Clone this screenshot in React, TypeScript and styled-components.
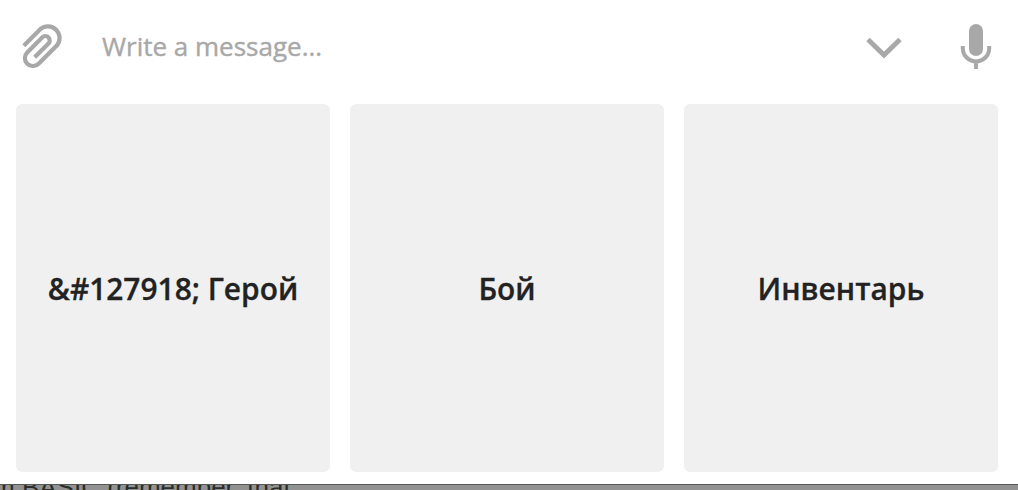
/**
 * Message composer with a reply keyboard underneath it. A strip of the
 * dimmed page behind the panel shows along the bottom edge.
 */
import styled, { createGlobalStyle } from 'styled-components';

const KEYS = ['&#127918; Герой', 'Бой', 'Инвентарь'];

const GlobalStyle = createGlobalStyle`
  * {
    box-sizing: border-box;
  }

  body {
    margin: 0;
    background: #fff;
    font-family: 'Open Sans', 'Noto Sans', sans-serif;
  }
`;

const Screen = styled.div`
  display: flex;
  flex-direction: column;
  height: 490px;
  overflow: hidden;
`;

const Composer = styled.div`
  display: flex;
  align-items: center;
  flex: none;
  height: 104px;
  padding: 0 26px 12px 22px;
  color: #a8a8a8;
`;

const IconButton = styled.button<{ $width: number; $gap?: number }>`
  flex: none;
  width: ${({ $width }) => $width}px;
  height: 46px;
  margin: 0 0 0 ${({ $gap = 0 }) => $gap}px;
  padding: 0;
  border: 0;
  background: none;
  color: inherit;

  svg {
    display: block;
    fill: none;
    stroke: currentColor;
    stroke-width: 4;
  }
`;

const Placeholder = styled.div`
  flex: 1;
  margin-left: 38px;
  font-size: 26px;
  line-height: 36px;
  white-space: nowrap;
  -webkit-text-stroke: 0.4px currentColor;
`;

const Keyboard = styled.div`
  display: grid;
  grid-template-columns: repeat(3, 314px);
  gap: 20px;
  flex: none;
  height: 368px;
  padding-left: 16px;
`;

const Key = styled.button`
  padding: 2px 0 0;
  border: 0;
  border-radius: 6px;
  background: #f0f0f0;
  color: #222;
  font-family: inherit;
  font-size: 29.9px;
  font-weight: 600;
  line-height: 42px;
  white-space: nowrap;
  -webkit-text-stroke: 0.3px currentColor;
`;

const Backdrop = styled.div`
  flex: none;
  height: 6px;
  margin-top: 12px;
  overflow: hidden;
  border-top: 1px solid #555855;
  background: #929292;
  color: #2b2e2b;
`;

const BackdropText = styled.div`
  margin: -13px 0 0 -7px;
  font-family: 'Liberation Sans', Arial, sans-serif;
  font-size: 26px;
  line-height: 30px;
  white-space: nowrap;
`;

function ClipIcon() {
  return (
    <svg width="42" height="46" viewBox="22 23 42 46" aria-hidden="true">
      <path
        d="M23.8 45.8 40.2 29.2A11.7 11.7 0 0 1 56.8 45.6L38.6 63.8A8 8 0 0 1 27.2 52.4L42.4 37.2A4.4 4.4 0 0 1 48.7 43.3L34.7 57.3"
        strokeWidth="4.2"
      />
    </svg>
  );
}

// stroke widths are set in CSS, since the shared svg rule is only inherited
const Chevron = styled.path`
  stroke-width: 4.9;
`;

function ChevronIcon() {
  return (
    <svg width="36" height="46" viewBox="866 23 36 46" aria-hidden="true">
      <Chevron d="M868 39.5 884 55 900 39.5" />
    </svg>
  );
}

function MicIcon() {
  return (
    <svg width="32" height="46" viewBox="960 23 32 46" aria-hidden="true">
      <rect x="969" y="24" width="14" height="32" rx="7" fill="currentColor" stroke="none" />
      <path d="M962.8 46V48.2A13.2 13.2 0 0 0 989.2 48.2V46M976 61V69" />
    </svg>
  );
}

export default function App() {
  return (
    <>
      <GlobalStyle />
      <Screen>
        <Composer>
          <IconButton $width={42} aria-label="Attach file">
            <ClipIcon />
          </IconButton>
          <Placeholder>Write a message...</Placeholder>
          <IconButton $width={36} aria-label="Hide keyboard">
            <ChevronIcon />
          </IconButton>
          <IconButton $width={32} $gap={58} aria-label="Record voice">
            <MicIcon />
          </IconButton>
        </Composer>
        <Keyboard>
          {KEYS.map((label) => (
            <Key key={label}>{label}</Key>
          ))}
        </Keyboard>
        <Backdrop>
          <BackdropText>m BASIC (remember, that</BackdropText>
        </Backdrop>
      </Screen>
    </>
  );
}
